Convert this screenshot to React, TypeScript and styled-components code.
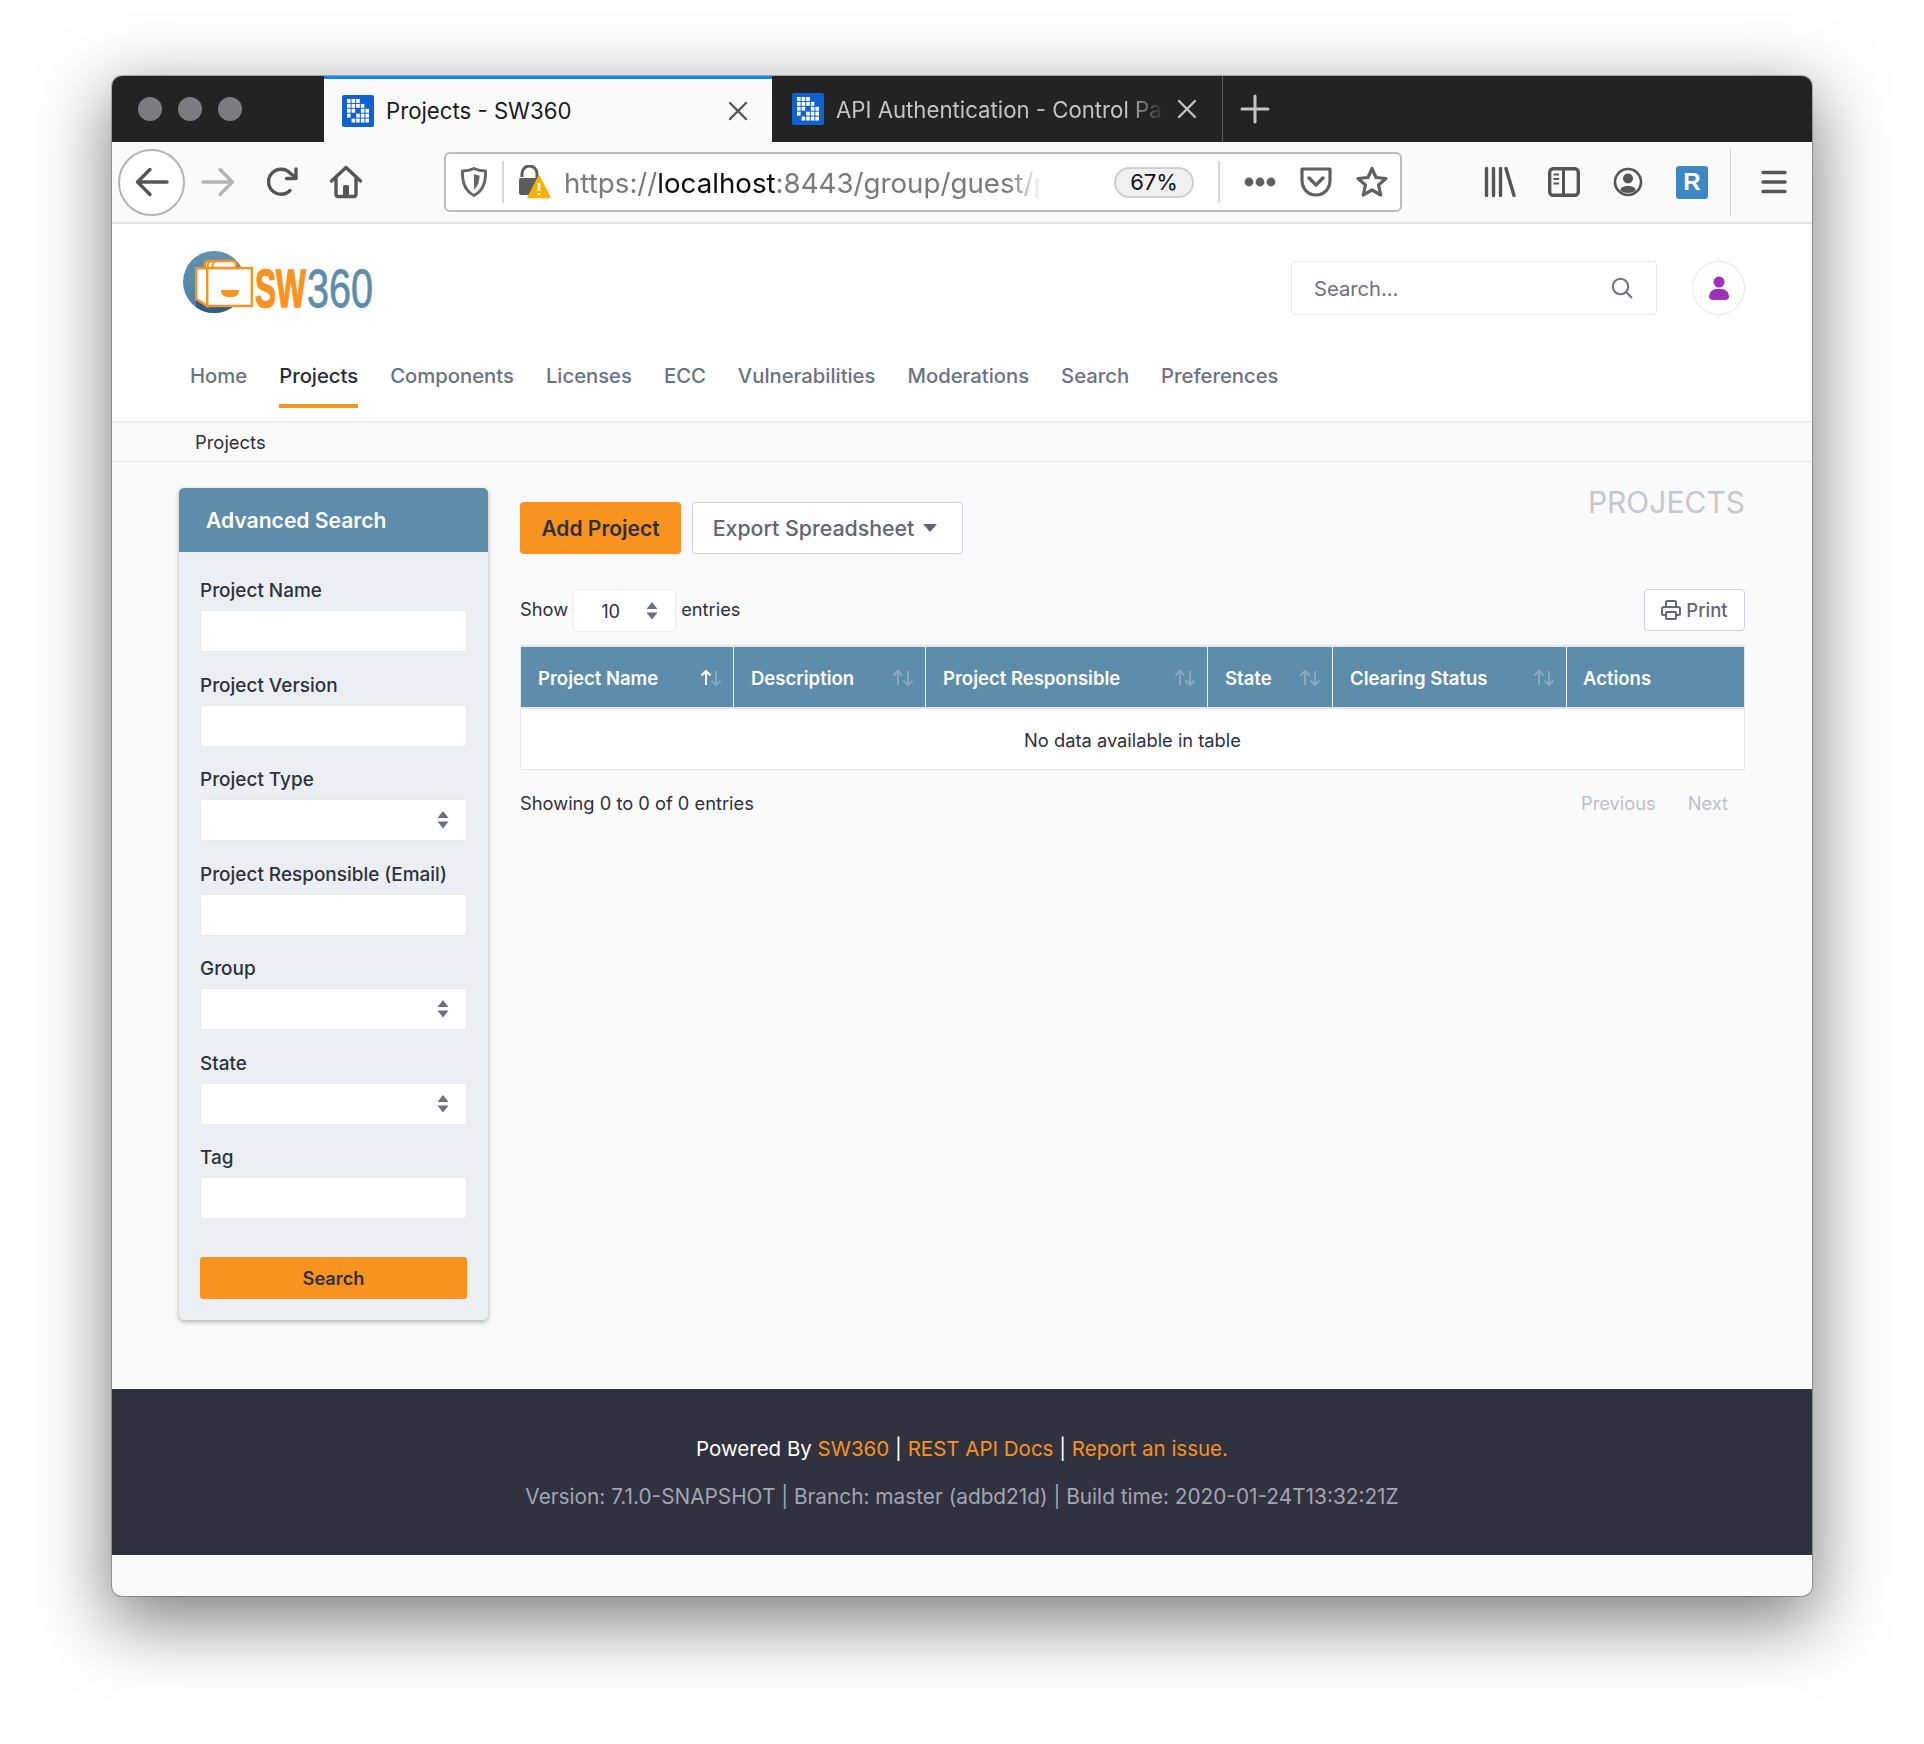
import React from "react";
import styled, { createGlobalStyle } from "styled-components";

const Global = createGlobalStyle`
  html, body { margin: 0; padding: 0; background: #fff; }
  body { font-family: Inter, "Liberation Sans", sans-serif; color: #2e3040; }
  * { box-sizing: border-box; }
`;

const Stage = styled.div`
  width: 1924px;
  height: 1744px;
  padding: 76px 112px 148px;
  overflow: hidden;
`;
const Win = styled.div`
  width: 1700px;
  height: 1520px;
  border-radius: 10px;
  background: #fafafa;
  box-shadow: 0 22px 70px 4px rgba(0, 0, 0, 0.5), 0 0 0 1px rgba(0, 0, 0, 0.25);
  display: flex;
  flex-direction: column;
`;
const TabBar = styled.div`
  height: 66px;
  background: #232323;
  border-radius: 10px 10px 0 0;
  display: flex;
  align-items: stretch;
  flex: none;
`;
const Lights = styled.div`
  width: 212px;
  padding-left: 26px;
  display: flex;
  gap: 16px;
  align-items: center;
`;
const Light = styled.span`
  width: 24px;
  height: 24px;
  border-radius: 50%;
  background: #7c7c80;
`;
const Tab = styled.div<{ $active?: boolean }>`
  width: ${(p) => (p.$active ? 448 : 451)}px;
  display: flex;
  align-items: center;
  padding: 0 ${(p) => (p.$active ? 24 : 25)}px 0 ${(p) => (p.$active ? 18 : 20)}px;
  gap: 12px;
  background: ${(p) => (p.$active ? "#fafafa" : "transparent")};
  border-top: ${(p) => (p.$active ? "3px solid #0a84ff" : "none")};
  border-right: ${(p) => (p.$active ? "none" : "1px solid #5a5a5a")};
  color: ${(p) => (p.$active ? "#1a1a1a" : "#c4c4c4")};
`;
const TabTitle = styled.span<{ $fade?: boolean }>`
  flex: 1;
  font-size: 22.2px;
  line-height: 30px;
  padding-top: 1px;
  white-space: nowrap;
  overflow: hidden;
  ${(p) =>
    p.$fade
      ? "-webkit-mask-image: linear-gradient(to right, #000 88%, transparent 100%); mask-image: linear-gradient(to right, #000 88%, transparent 100%);"
      : ""}
`;
const PlusSlot = styled.div`
  width: 64px;
  display: flex;
  align-items: center;
  justify-content: center;
`;
const Toolbar = styled.div`
  height: 82px;
  flex: none;
  background: #fafafa;
  border-bottom: 2px solid #e2e2e2;
  display: flex;
  align-items: center;
  padding: 0 0 0 6px;
`;
const BackCircle = styled.div`
  width: 67px;
  height: 67px;
  margin-right: 1px;
  border-radius: 50%;
  background: #fff;
  border: 2px solid #b4b4b4;
  display: flex;
  align-items: center;
  justify-content: center;
  flex: none;
`;
const ToolSlot = styled.div`
  width: 64px;
  height: 40px;
  display: flex;
  align-items: center;
  justify-content: center;
  flex: none;
`;
const UrlBar = styled.div`
  margin-left: 66px;
  width: 958px;
  height: 60px;
  border: 2px solid #bdbdbd;
  border-radius: 6px;
  background: #fff;
  display: flex;
  align-items: center;
  flex: none;
`;
const UrlShield = styled.div`
  width: 56px;
  display: flex;
  justify-content: center;
  flex: none;
`;
const UrlSep = styled.span`
  width: 2px;
  height: 42px;
  background: #d8d8d8;
  flex: none;
`;
const UrlLock = styled.div`
  width: 60px;
  display: flex;
  justify-content: center;
  flex: none;
`;
const UrlText = styled.div`
  width: 478px;
  padding-top: 2px;
  font-size: 27.7px;
  color: #7a7a7a;
  white-space: nowrap;
  overflow: hidden;
  flex: none;
  -webkit-mask-image: linear-gradient(to right, #000 93%, transparent 100%);
  mask-image: linear-gradient(to right, #000 93%, transparent 100%);
  b {
    font-weight: 400;
    color: #0c0c0c;
  }
`;
const Zoom = styled.div`
  margin-left: 72px;
  width: 80px;
  height: 31px;
  border: 2px solid #cfcfcf;
  border-radius: 16px;
  background: #f0f0f0;
  color: #111;
  font-size: 22px;
  display: flex;
  align-items: center;
  justify-content: center;
  flex: none;
`;
const UrlSepRight = styled(UrlSep)`
  margin-left: 24px;
`;
const PageActions = styled.div`
  display: flex;
  align-items: center;
  margin-left: 12px;
  gap: 0;
`;
const UrlAction = styled.div`
  width: 56px;
  display: flex;
  justify-content: center;
`;
const ToolsRight = styled.div`
  display: flex;
  align-items: center;
  margin-left: 66px;
`;
const ToolDivider = styled.span`
  width: 1px;
  height: 68px;
  background: #d4d4d4;
  margin-left: 6px;
`;
const MenuSlot = styled(ToolSlot)`
  margin-left: 11px;
`;
const RBadge = styled.div`
  width: 32px;
  height: 33px;
  border-radius: 3px;
  background: #3d87c5;
  color: #fff;
  font: 700 24px "Liberation Sans", sans-serif;
  display: flex;
  align-items: center;
  justify-content: center;
`;

const Header = styled.header`
  flex: none;
  background: #fff;
  height: 198px;
  border-bottom: 1px solid #e4e5e8;
  padding: 37px 67px 0 67px;
`;
const HeaderTop = styled.div`
  display: flex;
  align-items: center;
  height: 54px;
`;
const Logo = styled.svg`
  width: 200px;
  height: 70px;
  flex: none;
  margin: -6px 0 0 1px;
`;
const HeaderSearch = styled.div`
  margin-left: auto;
  width: 366px;
  height: 54px;
  border: 1px solid #e6e7ea;
  border-radius: 4px;
  background: #fff;
  display: flex;
  align-items: center;
  justify-content: space-between;
  padding: 0 23px 0 22px;
  color: #6d6f82;
  font-size: 20.2px;
`;
const Avatar = styled.div`
  margin-left: 35px;
  width: 53px;
  height: 54px;
  border-radius: 50%;
  border: 1px solid #e6e7ea;
  display: flex;
  align-items: center;
  justify-content: center;
`;
const Nav = styled.nav`
  margin-top: 39px;
  padding-left: 11px;
  display: flex;
  gap: 32px;
`;
const NavLink = styled.a<{ $active?: boolean }>`
  height: 54px;
  padding-bottom: 10px;
  line-height: 44px;
  font-size: 20.25px;
  font-weight: 500;
  color: ${(p) => (p.$active ? "#2a2c3a" : "#6b7280")};
  border-bottom: 4px solid ${(p) => (p.$active ? "#f7931e" : "transparent")};
  white-space: nowrap;
`;
const Crumb = styled.div`
  flex: none;
  height: 40px;
  border-bottom: 1px solid #e4e5e8;
  padding-left: 83px;
  font-size: 18.4px;
  line-height: 41px;
  color: #2e3040;
`;
const Content = styled.main`
  flex: 1;
  display: flex;
  padding: 22px 67px 0 67px;
  gap: 32px;
  min-height: 0;
`;
const Side = styled.aside`
  width: 309px;
  height: 832px;
  margin-top: 4px;
  background: #ebeff3;
  border-radius: 5px;
  box-shadow: 0 2px 5px rgba(0, 0, 0, 0.3);
  flex: none;
`;
const SideHead = styled.div`
  height: 64px;
  background: #5d8dab;
  border-radius: 5px 5px 0 0;
  color: #fff;
  font-size: 21.1px;
  font-weight: 600;
  line-height: 65px;
  padding-left: 27px;
`;
const SideBody = styled.div`
  padding: 26px 21px 0;
`;
const Field = styled.div`
  height: 94.5px;
`;
const FieldLabel = styled.label`
  display: block;
  height: 32px;
  line-height: 26px;
  font-size: 18.95px;
  font-weight: 500;
  color: #2e3040;
  white-space: nowrap;
`;
const InputBox = styled.div`
  width: 267px;
  height: 42px;
  background: #fff;
  border: 1px solid #e8eaee;
  border-radius: 3px;
  display: flex;
  align-items: center;
  justify-content: flex-end;
  padding-right: 17px;
`;
const SearchBtn = styled.button`
  display: block;
  width: 267px;
  height: 42px;
  margin: 17px 0 0 0;
  padding-top: 2px;
  border: 0;
  border-radius: 3px;
  background: #f7931e;
  color: #2e3040;
  font: 600 18.2px Inter, sans-serif;
`;
const Main = styled.section`
  flex: 1;
  min-width: 0;
`;
const TopRow = styled.div`
  display: flex;
  justify-content: space-between;
  height: 70px;
`;
const TopButtons = styled.div`
  display: flex;
  gap: 11px;
  margin-top: 18px;
  height: 52px;
`;
const AddBtn = styled.button`
  width: 161px;
  border: 0;
  border-radius: 4px;
  background: #f7931e;
  color: #2e3040;
  font: 600 21px Inter, sans-serif;
`;
const ExportBtn = styled.button`
  width: 271px;
  padding: 0 5px 0 0;
  border: 1px solid #cfd0dc;
  border-radius: 4px;
  background: #fff;
  color: #62647a;
  font: 500 21.3px Inter, sans-serif;
  display: flex;
  align-items: center;
  justify-content: center;
  gap: 9px;
`;
const Caret = styled.span`
  width: 0;
  height: 0;
  border-left: 7px solid transparent;
  border-right: 7px solid transparent;
  border-top: 8px solid #62647a;
`;
const Title = styled.h1`
  margin: 0;
  font-size: 30px;
  font-weight: 400;
  line-height: 36px;
  color: #c5c8cd;
`;
const ShowRow = styled.div`
  margin-top: 35px;
  height: 43px;
  display: flex;
  align-items: center;
  font-size: 18.3px;
  color: #2e3040;
`;
const LenSelect = styled.div`
  width: 103px;
  height: 43px;
  margin: 0 5px 0 5px;
  border: 1px solid #ecedf0;
  border-radius: 4px;
  background: #fff;
  display: flex;
  align-items: center;
  justify-content: space-between;
  padding: 1px 17px 0 27px;
  font-size: 18.3px;
`;
const ShowLabel = styled.span`
  margin-top: -3px;
`;
const PrintBtn = styled.button`
  margin-left: auto;
  width: 101px;
  height: 42px;
  margin-top: -1px;
  border: 1px solid #cfd0dc;
  border-radius: 4px;
  background: #fff;
  color: #62647a;
  font: 500 18.5px Inter, sans-serif;
  display: flex;
  align-items: center;
  justify-content: center;
  gap: 5px;
`;
const Table = styled.table`
  margin-top: 13px;
  width: 1225px;
  table-layout: fixed;
  border-collapse: separate;
  border-spacing: 0;
`;
const Th = styled.th<{ $w: number; $pos?: "first" | "last" }>`
  width: ${(p) => p.$w}px;
  height: 64px;
  background: #5d8dab;
  border-top: 2px solid #e4e6ea;
  border-bottom: 2px solid #e4e6ea;
  border-left: ${(p) => (p.$pos === "first" ? "1px solid #e4e6ea" : "0")};
  border-right: ${(p) => (p.$pos === "last" ? "1px solid #e4e6ea" : "1px solid #e9eef2")};
  padding: 1px 11px 0 ${(p) => (p.$pos === "last" ? 16 : 17)}px;
  text-align: left;
  color: #fff;
  font-size: 18.5px;
  font-weight: 600;
`;
const ThInner = styled.div`
  display: flex;
  align-items: center;
  justify-content: space-between;
  white-space: nowrap;
`;
const Td = styled.td`
  height: 61px;
  padding-top: 2px;
  background: #fff;
  border: 1px solid #e6e7ea;
  border-top: 0;
  text-align: center;
  font-size: 18.3px;
  color: #2e3040;
`;
const InfoRow = styled.div`
  margin-top: 21px;
  line-height: 24px;
  font-size: 18.3px;
  display: flex;
  justify-content: space-between;
`;
const Pager = styled.div`
  display: flex;
  gap: 32px;
  padding-right: 17px;
  color: #bdbfc9;
`;
const Footer = styled.footer`
  flex: none;
  height: 166px;
  margin-bottom: 41px;
  background: #30323f;
  text-align: center;
  padding-top: 46px;
  font-size: 20.5px;
  line-height: 28px;
  color: #fff;
`;
const FootLink = styled.a`
  color: #f7931e;
`;
const FootMeta = styled.div`
  margin-top: 20px;
  font-size: 20.8px;
  color: #a3a4b2;
`;

const Favicon = () => (
  <svg width="32" height="32" viewBox="0 0 32 32" style={{ flex: "none" }}>
    <rect width="32" height="32" rx="2" fill="#0f62cf" />
    {[
      [0, 0], [1, 0], [2, 0],
      [0, 1], [1, 1], [2, 1], [3, 1],
      [0, 2], [1, 2], [3, 2], [4, 2],
      [0, 3], [2, 3], [3, 3], [4, 3],
      [1, 4], [2, 4], [3, 4], [4, 4],
    ].map(([x, y]) => (
      <rect key={`${x}-${y}`} x={5 + x * 4.6} y={4 + y * 4.9} width="3.6" height="3.9" fill="#fff" />
    ))}
  </svg>
);
const Close = ({ c }: { c: string }) => (
  <svg width="20" height="20" viewBox="0 0 20 20" style={{ flex: "none" }}>
    <path d="M2 2 L18 18 M18 2 L2 18" stroke={c} strokeWidth="2.4" strokeLinecap="round" />
  </svg>
);
const Sort = ({ active }: { active?: boolean }) => (
  <svg width="22" height="18" viewBox="0 0 22 18" style={{ flex: "none" }}>
    <path d="M6 16 V2 M1.5 6.5 L6 2 L10.5 6.5" fill="none" stroke={active ? "#fff" : "#9db9cb"} strokeOpacity={active ? 1 : 0.65} strokeWidth="2" />
    <path d="M16 2 V16 M11.5 11.5 L16 16 L20.5 11.5" fill="none" stroke="#9db9cb" strokeOpacity="0.65" strokeWidth="2" />
  </svg>
);
const Updown = () => (
  <svg width="12" height="18" viewBox="0 0 12 18" style={{ flex: "none" }}>
    <path d="M6 0 L11.5 7 H0.5 Z M0.5 10.5 H11.5 L6 17.5 Z" fill="#6c6e84" />
  </svg>
);

const cols: [string, number, boolean | null][] = [
  ["Project Name", 214, true],
  ["Description", 192, false],
  ["Project Responsible", 282, false],
  ["State", 125, false],
  ["Clearing Status", 234, false],
  ["Actions", 178, null],
];
const fields: [string, boolean][] = [
  ["Project Name", false],
  ["Project Version", false],
  ["Project Type", true],
  ["Project Responsible (Email)", false],
  ["Group", true],
  ["State", true],
  ["Tag", false],
];
const navItems = ["Home", "Projects", "Components", "Licenses", "ECC", "Vulnerabilities", "Moderations", "Search", "Preferences"];

export default function App() {
  return (
    <Stage>
      <Global />
      <Win>
        <TabBar>
          <Lights>
            <Light />
            <Light />
            <Light />
          </Lights>
          <Tab $active>
            <Favicon />
            <TabTitle>Projects - SW360</TabTitle>
            <Close c="#555" />
          </Tab>
          <Tab>
            <Favicon />
            <TabTitle $fade>API Authentication - Control Panel</TabTitle>
            <Close c="#c4c4c4" />
          </Tab>
          <PlusSlot>
            <svg width="30" height="30" viewBox="0 0 30 30">
              <path d="M15 2 V28 M2 15 H28" stroke="#c4c4c4" strokeWidth="3" strokeLinecap="round" />
            </svg>
          </PlusSlot>
        </TabBar>
        <Toolbar>
          <BackCircle>
            <svg width="34" height="30" viewBox="0 0 34 30">
              <path d="M32 15 H3 M15 2.5 L2.5 15 L15 27.5" fill="none" stroke="#555" strokeWidth="3.4" strokeLinecap="round" strokeLinejoin="round" />
            </svg>
          </BackCircle>
          <ToolSlot>
            <svg width="34" height="30" viewBox="0 0 34 30">
              <path d="M2 15 H31 M19 2.5 L31.5 15 L19 27.5" fill="none" stroke="#b5b5b5" strokeWidth="3.4" strokeLinecap="round" strokeLinejoin="round" />
            </svg>
          </ToolSlot>
          <ToolSlot>
            <svg width="32" height="32" viewBox="0 0 32 32">
              <path d="M24 24.5 A12.5 12.5 0 1 1 24 7 L29 11" fill="none" stroke="#555" strokeWidth="3.4" strokeLinecap="round" />
              <path d="M30 3 V12.5 H20.5" fill="none" stroke="#555" strokeWidth="3.4" strokeLinecap="round" strokeLinejoin="round" />
            </svg>
          </ToolSlot>
          <ToolSlot>
            <svg width="34" height="34" viewBox="0 0 34 34">
              <path d="M2.5 16 L17 2.5 L31.5 16 M7 13 V29 Q7 31.5 9.5 31.5 H24.5 Q27 31.5 27 29 V13" fill="none" stroke="#555" strokeWidth="3.4" strokeLinecap="round" strokeLinejoin="round" />
              <path d="M14 31 V22 Q14 20 16 20 H18 Q20 20 20 22 V31 Z" fill="#555" />
            </svg>
          </ToolSlot>
          <UrlBar>
            <UrlShield>
              <svg width="26" height="30" viewBox="0 0 26 30">
                <path d="M13 1.5 C17 3.5 21 4 24.5 4 C25 15 22 24 13 28.5 C4 24 1 15 1.5 4 C5 4 9 3.5 13 1.5 Z" fill="none" stroke="#666" strokeWidth="3" strokeLinejoin="round" />
                <path d="M13 7 C15 8 17 8.2 18.5 8.3 C18.5 15 16.5 20 13 22.5 Z" fill="#666" />
              </svg>
            </UrlShield>
            <UrlSep />
            <UrlLock>
              <svg width="32" height="34" viewBox="0 0 32 34">
                <path d="M4 12 V8.5 A7.5 7.5 0 0 1 19 8.5 V13" fill="none" stroke="#5d5d5d" strokeWidth="3" />
                <rect x="1" y="13" width="20" height="17" rx="2" fill="#5d5d5d" />
                <path d="M21 11 L32 32.5 H10 Z" fill="#ffb000" stroke="#ffb000" strokeWidth="1.5" strokeLinejoin="round" />
                <path d="M21 18 V26 M21 28 V30" stroke="#fff" strokeWidth="2.4" />
              </svg>
            </UrlLock>
            <UrlText>
              https://<b>localhost</b>:8443/group/guest/pr
            </UrlText>
            <Zoom>67%</Zoom>
            <UrlSepRight />
            <PageActions>
              <UrlAction>
                <svg width="32" height="10" viewBox="0 0 32 10">
                  <circle cx="5" cy="5" r="4.4" fill="#606060" />
                  <circle cx="16" cy="5" r="4.4" fill="#606060" />
                  <circle cx="27" cy="5" r="4.4" fill="#606060" />
                </svg>
              </UrlAction>
              <UrlAction>
                <svg width="32" height="30" viewBox="0 0 32 30">
                  <path d="M2 2 H30 V13 C30 22 24 28 16 28 C8 28 2 22 2 13 Z" fill="none" stroke="#606060" strokeWidth="3.2" strokeLinejoin="round" />
                  <path d="M9 11 L16 18 L23 11" fill="none" stroke="#606060" strokeWidth="3.4" strokeLinecap="round" strokeLinejoin="round" />
                </svg>
              </UrlAction>
              <UrlAction>
                <svg width="32" height="32" viewBox="0 0 32 32">
                  <path d="M16 2.5 L20 11.5 L30 12.5 L22.5 19 L24.8 29 L16 24 L7.2 29 L9.5 19 L2 12.5 L12 11.5 Z" fill="none" stroke="#606060" strokeWidth="3.2" strokeLinejoin="round" />
                </svg>
              </UrlAction>
            </PageActions>
          </UrlBar>
          <ToolsRight>
            <ToolSlot>
              <svg width="32" height="30" viewBox="0 0 32 30">
                <path d="M2.5 1.5 V28.5 M9.5 1.5 V28.5 M16.5 1.5 V28.5 M22 1.5 L30 28.5" stroke="#555" strokeWidth="3.4" strokeLinecap="round" />
              </svg>
            </ToolSlot>
            <ToolSlot>
              <svg width="32" height="30" viewBox="0 0 32 30">
                <rect x="1.7" y="1.7" width="28.6" height="26.6" rx="3.5" fill="none" stroke="#555" strokeWidth="3.4" />
                <path d="M15.5 2 V28" stroke="#555" strokeWidth="3" />
                <path d="M5.5 7.5 H11 M5.5 12 H11 M5.5 16.5 H11" stroke="#555" strokeWidth="2.2" />
              </svg>
            </ToolSlot>
            <ToolSlot>
              <svg width="30" height="30" viewBox="0 0 30 30">
                <circle cx="15" cy="15" r="13" fill="none" stroke="#555" strokeWidth="2.6" />
                <circle cx="15" cy="11.5" r="5" fill="#555" />
                <path d="M7 23 C8.5 17.5 21.5 17.5 23 23 C20 27 10 27 7 23 Z" fill="#555" />
              </svg>
            </ToolSlot>
            <ToolSlot>
              <RBadge>R</RBadge>
            </ToolSlot>
            <ToolDivider />
            <MenuSlot>
              <svg width="26" height="26" viewBox="0 0 26 26">
                <path d="M2 3.5 H24 M2 13 H24 M2 22.5 H24" stroke="#555" strokeWidth="3.4" strokeLinecap="round" />
              </svg>
            </MenuSlot>
          </ToolsRight>
        </Toolbar>
        <Header>
          <HeaderTop>
            <Logo viewBox="0 0 200 70">
              <defs>
                <linearGradient id="g" x1="0" y1="0" x2="0" y2="1">
                  <stop offset="0" stopColor="#6093b3" />
                  <stop offset="1" stopColor="#4d7f9f" />
                </linearGradient>
              </defs>
              <circle cx="34" cy="32" r="31" fill="url(#g)" />
              <path d="M16 49 L27 56 H54 A31 31 0 0 1 16 57 Z" fill="#2f5f80" />
              <path d="M25 18 V14 Q25 11 28 11 H52 Q56 11 56 14 V18 Z" fill="#fff" stroke="#f7931e" strokeWidth="2.4" />
              <path d="M30 11.5 Q27.5 12.5 27.5 18 M35 11.5 Q32.5 12.5 32.5 18" fill="none" stroke="#f7931e" strokeWidth="2" />
              <path d="M16.2 18.2 H27.2 V56 L16.2 49 Z" fill="#fff" stroke="#f7931e" strokeWidth="2.4" />
              <rect x="27.2" y="18.2" width="44.6" height="37.8" fill="#fff" stroke="#f7931e" strokeWidth="2.4" />
              <path d="M41 40 H59 Q59 47 52 47 H48 Q41 47 41 40 Z" fill="#f7931e" />
              <text x="75" y="57" fontFamily="'Liberation Sans', sans-serif" fontWeight="700" fontSize="54" fill="#f7931e" stroke="#f7931e" strokeWidth="1.6" textLength="51" lengthAdjust="spacingAndGlyphs">SW</text>
              <text x="127" y="57" fontFamily="'Liberation Sans', sans-serif" fontWeight="400" fontSize="54" fill="#5d8dab" stroke="#5d8dab" strokeWidth="0.8" textLength="66" lengthAdjust="spacingAndGlyphs">360</text>
            </Logo>
            <HeaderSearch>
              <span>Search...</span>
              <svg width="22" height="22" viewBox="0 0 22 22">
                <circle cx="9.5" cy="9.5" r="7.7" fill="none" stroke="#6d6f82" strokeWidth="2" />
                <path d="M15 15 L21 21" stroke="#6d6f82" strokeWidth="2" />
              </svg>
            </HeaderSearch>
            <Avatar>
              <svg width="22" height="24" viewBox="0 0 22 24">
                <circle cx="11" cy="6" r="5.5" fill="#9c33b8" />
                <path d="M1 21 C1 16 5 13 8 13 H14 C17 13 21 16 21 21 C21 23 19 24 17 24 H5 C3 24 1 23 1 21 Z" fill="#9c33b8" />
              </svg>
            </Avatar>
          </HeaderTop>
          <Nav>
            {navItems.map((n) => (
              <NavLink key={n} $active={n === "Projects"}>
                {n}
              </NavLink>
            ))}
          </Nav>
        </Header>
        <Crumb>Projects</Crumb>
        <Content>
          <Side>
            <SideHead>Advanced Search</SideHead>
            <SideBody>
              {fields.map(([label, sel]) => (
                <Field key={label}>
                  <FieldLabel>{label}</FieldLabel>
                  <InputBox>{sel && <Updown />}</InputBox>
                </Field>
              ))}
              <SearchBtn>Search</SearchBtn>
            </SideBody>
          </Side>
          <Main>
            <TopRow>
              <TopButtons>
                <AddBtn>Add Project</AddBtn>
                <ExportBtn>
                  Export Spreadsheet <Caret />
                </ExportBtn>
              </TopButtons>
              <Title>PROJECTS</Title>
            </TopRow>
            <ShowRow>
              <ShowLabel>Show</ShowLabel>
              <LenSelect>
                10
                <Updown />
              </LenSelect>
              <ShowLabel>entries</ShowLabel>
              <PrintBtn>
                <svg width="20" height="20" viewBox="0 0 20 20">
                  <path d="M5 7 V2.5 Q5 1 6.5 1 H13.5 Q15 1 15 2.5 V7 M5 15 H2.5 Q1 15 1 13.5 V9 Q1 7 3 7 H17 Q19 7 19 9 V13.5 Q19 15 17.5 15 H15" fill="none" stroke="#62647a" strokeWidth="2" />
                  <rect x="5" y="12" width="10" height="7" rx="1" fill="none" stroke="#62647a" strokeWidth="2" />
                </svg>
                Print
              </PrintBtn>
            </ShowRow>
            <Table>
              <thead>
                <tr>
                  {cols.map(([name, w, sort], i) => (
                    <Th key={name} $w={w} $pos={i === 0 ? "first" : i === cols.length - 1 ? "last" : undefined}>
                      <ThInner>
                        {name}
                        {sort !== null && <Sort active={sort} />}
                      </ThInner>
                    </Th>
                  ))}
                </tr>
              </thead>
              <tbody>
                <tr>
                  <Td colSpan={6}>No data available in table</Td>
                </tr>
              </tbody>
            </Table>
            <InfoRow>
              <span>Showing 0 to 0 of 0 entries</span>
              <Pager>
                <span>Previous</span>
                <span>Next</span>
              </Pager>
            </InfoRow>
          </Main>
        </Content>
        <Footer>
          <div>
            Powered By <FootLink>SW360</FootLink> | <FootLink>REST API Docs</FootLink> | <FootLink>Report an issue.</FootLink>
          </div>
          <FootMeta>Version: 7.1.0-SNAPSHOT | Branch: master (adbd21d) | Build time: 2020-01-24T13:32:21Z</FootMeta>
        </Footer>
      </Win>
    </Stage>
  );
}
